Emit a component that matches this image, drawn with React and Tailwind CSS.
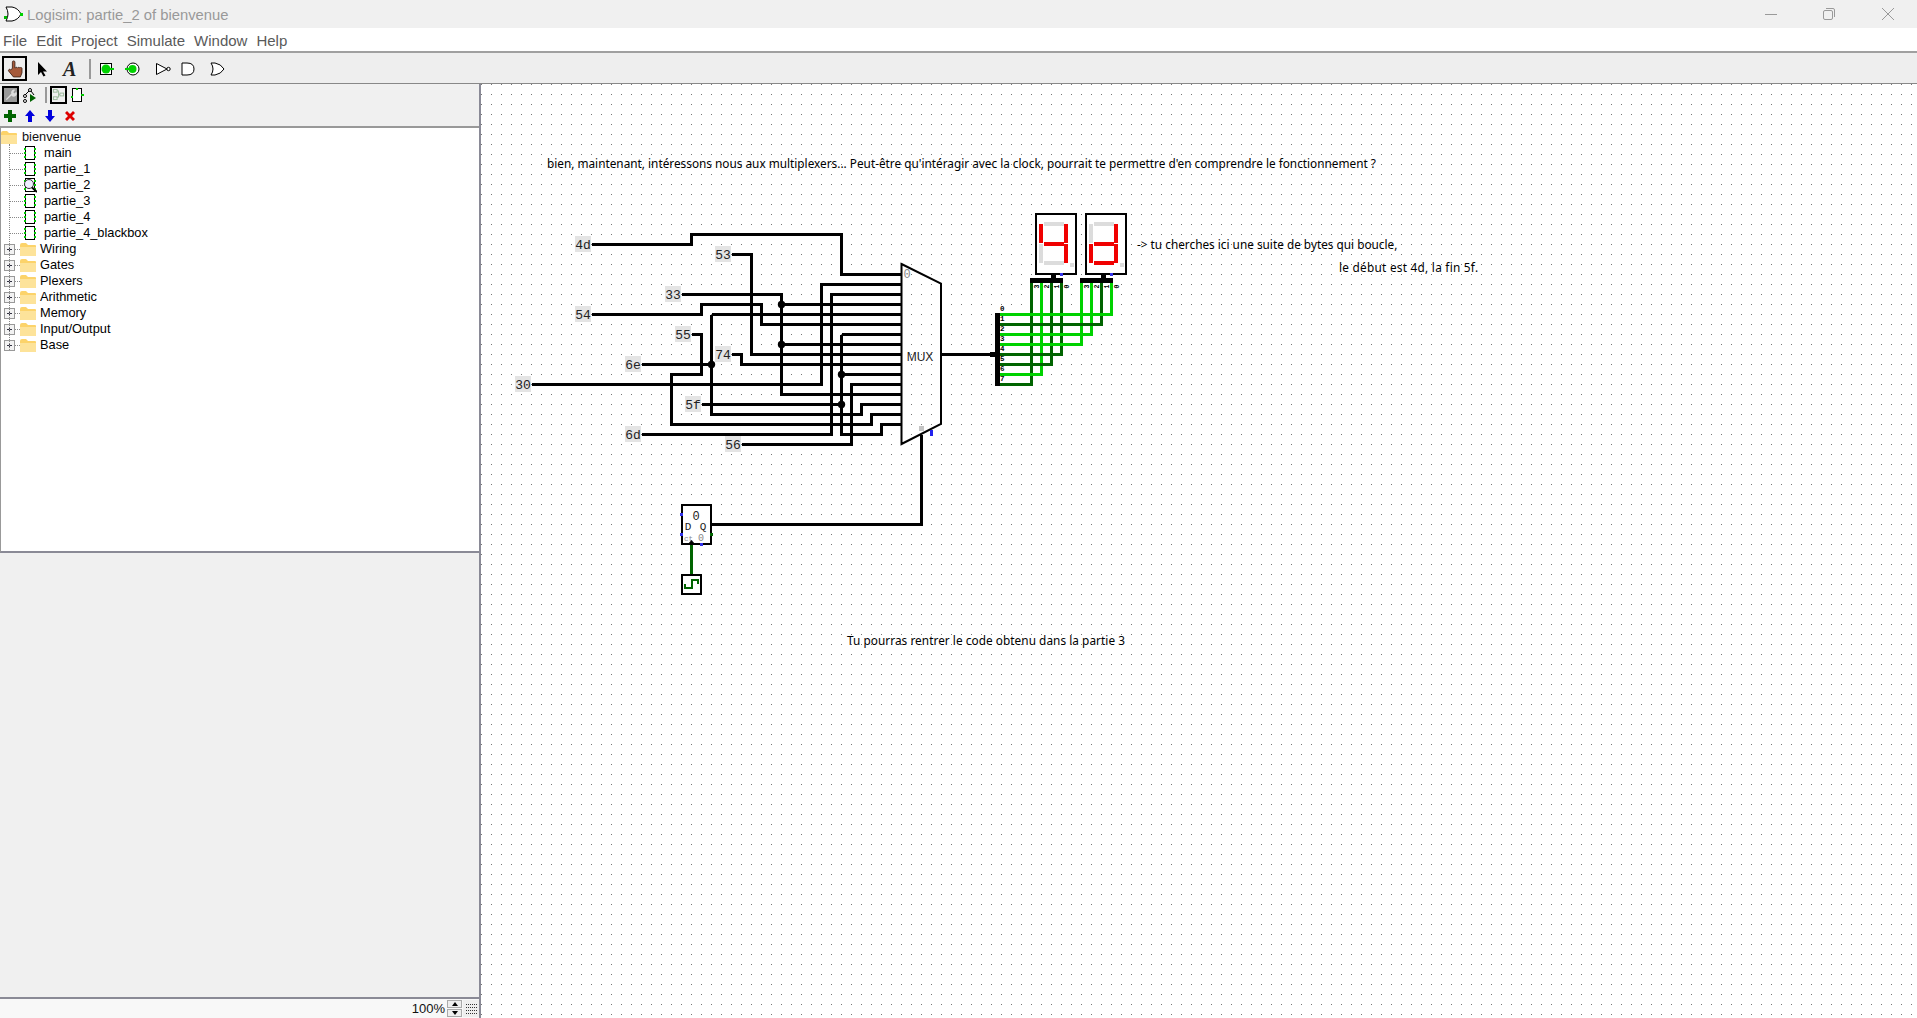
const F='"Liberation Sans", Arial, sans-serif';
const LIGHT='#00d200',DARK='#006400';
const wires=[
'M591 244H691V234H841V274H901',
'M731 254H751V354H901',
'M681 294H781V394H901','M781 304H901','M781 344H901',
'M591 314H701V304H761V324H901',
'M711 314H901','M711 314V414H861V404H901','M641 364H711',
'M731 354H741V364H901',
'M691 334H701V374H671V424H871V414H901',
'M701 404H841','M841 334V434H881V424H901','M841 334H901','M841 374H901',
'M741 444H851V384H901',
'M531 384H821V284H901',
'M641 434H831V294H901',
'M941 354H995','M921 434V524H711',
];
const juncs=[[781,304],[781,344],[711,364],[841,374],[841,404]];
const pins=[['4d',583,244],['53',723,254],['33',673,294],['54',583,314],['55',683,334],['74',723,354],['6e',633,364],['30',523,384],['5f',693,404],['6d',633,434],['56',733,444]];
const greens=[
[1031,384,DARK],[1041,374,LIGHT],[1051,364,DARK],[1061,354,DARK],
[1081,344,LIGHT],[1091,334,LIGHT],[1101,324,DARK],[1111,314,LIGHT]];
function Seven({x,on}){
 const c=k=>on.includes(k)?'#f00000':'#dcdcdc';
 return <g>
  <rect x={x} y={214} width={40} height={60} fill="#fff" stroke="#000" strokeWidth="2"/>
  <rect x={x+8} y={222} width={20} height={4} fill={c('a')}/>
  <rect x={x+3} y={224} width={4} height={19} fill={c('f')}/>
  <rect x={x+28} y={224} width={4} height={19} fill={c('b')}/>
  <rect x={x+8} y={242} width={20} height={4} fill={c('g')}/>
  <rect x={x+3} y={244} width={4} height={19} fill={c('e')}/>
  <rect x={x+28} y={244} width={4} height={19} fill={c('c')}/>
  <rect x={x+8} y={261} width={20} height={4} fill={c('d')}/>
  <rect x={x+34} y={263} width={4} height={4} fill="#dcdcdc"/>
  <rect x={x+24} y={273} width={3} height={3} fill="#3333ee"/>
  <rect x={x+15} y={275} width={5} height={4} fill="#000"/>
  <rect x={x-6} y={278} width={33} height={5} fill="#000"/>
 </g>;
}
function Canvas(){
 const mono='"Liberation Mono", monospace';
 return <svg className="block" width="1436" height="934" viewBox="481 84 1436 934" shapeRendering="crispEdges">
  <defs><pattern id="dots" x="1" y="4" width="10" height="10" patternUnits="userSpaceOnUse"><rect width="1" height="1" fill="#777"/></pattern></defs>
  <rect x="481" y="84" width="1436" height="934" fill="#fff"/>
  <rect x="481" y="84" width="1436" height="934" fill="url(#dots)"/>
  {greens.map(([x,y,c],i)=><path key={i} d={`M${x+0.5} 282V${y+0.5}H1000`} fill="none" stroke={c} strokeWidth="3"/>)}
  <rect x="995" y="313" width="5" height="73" fill="#000"/>
  <rect x="990" y="352" width="5" height="5" fill="#000"/>
  {[0,1,2,3,4,5,6,7].map(i=><text key={i} x="1000" y={311+i*10} fontSize="7.500" fontWeight="700" fontFamily={mono} fill="#000">{i}</text>)}
  <g transform="translate(0.5 0.5)">{wires.map((d,i)=><path key={i} d={d} fill="none" stroke="#000" strokeWidth="3"/>)}</g>
  {pins.map(([t,x,y])=><g key={t}><rect x={x-8} y={y-8} width={16} height={16} fill="#e4e4e4"/><text x={x} y={y+4.500} textAnchor="middle" fontSize="13" fontFamily={mono} shapeRendering="auto" fill="#222">{t}</text></g>)}
  <g shapeRendering="auto">{juncs.map(([x,y],i)=><circle key={i} cx={x+0.5} cy={y+0.5} r="3.700" fill="#000"/>)}
   <path d="M901.500 264L941 283.500V424L901.500 444Z" fill="none" stroke="#000" strokeWidth="2"/>
   <text x="920" y="360.500" textAnchor="middle" fontSize="12" fontFamily={F} fill="#222">MUX</text>
   <text x="907" y="278" textAnchor="middle" fontSize="12" fontFamily={mono} fill="#888">0</text>
  </g>
  <rect x="919" y="426" width="5" height="5" fill="#c4c4c4"/>
  <rect x="930" y="430" width="3" height="6" fill="#2222ee"/>
  <Seven x={1036} on="bcfg"/>
  <Seven x={1086} on="bcdeg"/>
  {[0,1].map(d=>[0,1,2,3].map(i=><text key={d+'-'+i} transform={`translate(${1039+d*50+i*10} 288.500) rotate(-90)`} fontSize="6.500" fontWeight="700" fontFamily={mono} fill="#000">{3-i}</text>))}
  <path d="M691.500 544V574" stroke={DARK} strokeWidth="3" fill="none"/>
  <rect x="682" y="505" width="29" height="39" fill="#fff" stroke="#000" strokeWidth="2"/>
  <g shapeRendering="auto">
   <text x="696" y="520" textAnchor="middle" fontSize="12" fontFamily={mono} fill="#222">0</text>
   <text x="688" y="530" textAnchor="middle" fontSize="11" fontFamily={mono} fill="#222">D</text>
   <text x="703" y="530" textAnchor="middle" fontSize="11" fontFamily={mono} fill="#222">Q</text>
   <text x="688.500" y="541" textAnchor="middle" fontSize="7.500" fontFamily={mono} fill="#888">ct</text>
   <text x="701" y="541" textAnchor="middle" fontSize="10" fontFamily={mono} fill="#888">0</text>
   <path d="M688 544L691.500 540L695 544Z" fill="#000"/>
  </g>
  <rect x="680" y="513" width="3" height="3" fill="#3333ee"/>
  <rect x="680" y="533" width="3" height="3" fill="#3333ee"/>
  <rect x="700" y="543" width="3" height="3" fill="#3333ee"/>
  <rect x="710" y="533" width="3" height="3" fill={DARK}/>
  <rect x="682" y="575" width="19" height="19" fill="#fff" stroke="#000" strokeWidth="2"/>
  <path d="M685 584V588H692V580H698V584" fill="none" stroke={DARK} strokeWidth="2"/>
 </svg>;
}
function Note({x,y,track=0,children}){
 return <div className="absolute whitespace-nowrap text-[11.800px] leading-[14px] text-black" style={{left:x-481,top:y-84,letterSpacing:track,fontFamily:'"Noto Sans", sans-serif'}}>{children}</div>;
}
const Leaf=({name,mag})=><div className="flex items-center h-4 pl-[9px]">
 <div className="w-[13px] border-t border-dotted border-[#888]"/>
 <svg width="14" height="16" className="shrink-0" viewBox="0 0 14 16">
  <rect x="2.500" y="1.500" width="9" height="13" fill="#fff" stroke="#000"/>
  {[3,7,11].map(y=><g key={y}><rect x="1" y={y} width="2" height="2" fill="#00c800"/><rect x="11" y={y} width="2" height="2" fill="#00c800"/></g>)}
  {mag&&<g><circle cx="6" cy="7" r="4.500" fill="#eef" stroke="#333"/><path d="M9 10.500L14 15" stroke="#000" strokeWidth="2"/></g>}
 </svg>
 <span className="ml-[7px] text-black">{name}</span>
</div>;
const Folder=({s=16})=><svg width={s} height="13" viewBox="0 0 16 13" className="shrink-0"><path d="M0 2Q0 0 2 0H6L8 2H15Q16 2 16 3V12Q16 13 15 13H1Q0 13 0 12Z" fill="#fcd36a"/><path d="M0 4H16V12Q16 13 15 13H1Q0 13 0 12Z" fill="#fde39a"/></svg>;
const Lib=({name})=><div className="flex items-center h-4 pl-[3px]">
 <svg width="11" height="11" viewBox="0 0 11 11" className="shrink-0"><rect x=".5" y=".5" width="10" height="10" fill="#f2f2f2" stroke="#999"/><path d="M3 5.500H8M5.500 3V8" stroke="#334"/></svg>
 <div className="w-[5px] border-t border-dotted border-[#888]"/>
 <Folder/>
 <span className="ml-[4px] text-black">{name}</span>
</div>;
const Selected=({className,children})=><div className={"flex items-center justify-center border-[2px] border-black shrink-0 "+className}>{children}</div>;
export default function App(){
 return <div className="w-[1917px] h-[1018px] flex flex-col overflow-hidden bg-white text-[12px]" style={{fontFamily:F}}>
  <div className="h-[28px] shrink-0 bg-[#f0f0f0] flex items-center relative">
   <svg width="22" height="18" viewBox="0 0 22 18" className="ml-[3px]"><path d="M3 2H9Q15 3 18 9Q15 15 9 16H3Q7 9 3 2Z" fill="#fff" stroke="#000"/><rect x="1" y="11" width="3" height="3" fill="#00b400"/><rect x="17" y="8" width="3" height="3" fill="#00d200"/></svg>
   <span className="ml-[2px] pt-[3px] text-[#999999] text-[14.800px]">Logisim: partie_2 of bienvenue</span>
   <div className="ml-auto flex items-center">
    <svg width="14" height="14" viewBox="0 0 14 14" className="mr-[44px]"><path d="M1 7.500H13" stroke="#999"/></svg>
    <svg width="14" height="14" viewBox="0 0 14 14" className="mr-[45px]"><rect x="1.500" y="3.500" width="9" height="9" rx="1.500" fill="none" stroke="#999"/><path d="M4 1.500H11Q12.500 1.500 12.500 3V10" fill="none" stroke="#999"/></svg>
    <svg width="14" height="14" viewBox="0 0 14 14" className="mr-[22px]"><path d="M1 1L13 13M13 1L1 13" stroke="#999"/></svg>
   </div>
  </div>
  <div className="h-[25px] shrink-0 bg-white border-b-[2px] border-[#a0a0a0] flex items-center pl-[3px] pt-[4px] gap-[9px] text-[15px] text-[#5a5a5a]">
   {['File','Edit','Project','Simulate','Window','Help'].map(m=><span key={m}>{m}</span>)}
  </div>
  <div className="h-[31px] shrink-0 bg-[#eeeeee] flex items-center pl-[2px] pt-[1px] border-b border-[#888]">
   <Selected className="w-[25px] h-[25px]"><svg width="19" height="19" viewBox="0 0 18 18"><path d="M7 9V3a1.200 1.200 0 012.400 0V8.500h.4a1.100 1.100 0 012 0h.3a1.100 1.100 0 012 0a1.100 1.100 0 012 .5V13l-1.500 4H8L3.500 11.500a1.100 1.100 0 011.800-1.300Z" fill="#a5593a" stroke="#3a2015" strokeWidth=".8"/></svg></Selected>
   <svg width="14" height="16" viewBox="0 0 14 16" className="ml-[8px]"><path d="M3 1V14L6 11L8.500 15.500L10.500 14.500L8 10.500H12Z" fill="#000"/></svg>
   <span className="ml-[14px] w-[16px] text-[20px] leading-none font-bold italic text-[#222]" style={{fontFamily:'"Liberation Serif", serif'}}>A</span>
   <div className="w-[2px] h-[20px] bg-[#999] ml-[10px]"/>
   <svg width="16" height="16" viewBox="0 0 16 16" className="ml-[7px]"><rect x="2.500" y="2.500" width="11" height="11" fill="#fff" stroke="#000"/><circle cx="8" cy="8" r="4.500" fill="#00d200"/><rect x="12" y="7" width="4" height="2" fill="#00d200"/></svg>
   <svg width="16" height="16" viewBox="0 0 16 16" className="ml-[11px]"><circle cx="8" cy="8" r="6" fill="#fff" stroke="#000"/><circle cx="7.500" cy="8" r="4" fill="#00d200"/><rect x="0" y="7" width="4" height="2" fill="#00d200"/></svg>
   <svg width="16" height="16" viewBox="0 0 16 16" className="ml-[14px]"><path d="M1.500 2.500L12 8L1.500 13.500Z" fill="#fff" stroke="#000"/><circle cx="13.500" cy="8" r="1.700" fill="#fff" stroke="#000"/></svg>
   <svg width="16" height="16" viewBox="0 0 16 16" className="ml-[9px]"><path d="M2 2H7Q14 2 14 8Q14 14 7 14H2Z" fill="#fff" stroke="#000"/></svg>
   <svg width="16" height="16" viewBox="0 0 16 16" className="ml-[13px]"><path d="M2 2H6Q12 3 15 8Q12 13 6 14H2Q6 8 2 2Z" fill="#fff" stroke="#000"/></svg>
  </div>
  <div className="flex-1 flex min-h-0">
   <div className="w-[481px] shrink-0 flex flex-col border-r-[2px] border-[#8a8a96]">
    <div className="h-[44px] shrink-0 bg-[#f0f0f0] flex flex-col border-b-[2px] border-[#999]">
     <div className="h-[21px] flex items-center pl-[2px]">
      <div className="w-[17px] h-[18px] border-[2px] border-black bg-[#999] flex items-center justify-center"><svg width="13" height="13" viewBox="0 0 14 14"><path d="M2 12L8 6A3 3 0 0112 2L10 4.500L11.500 6L13 4A3 3 0 018 8L3 13Z" fill="#ddd"/></svg></div>
      <svg width="16" height="16" viewBox="0 0 16 16" className="ml-[3px]"><circle cx="8" cy="3" r="1.500" fill="#fff" stroke="#000"/><circle cx="3" cy="9" r="1.500" fill="#fff" stroke="#000"/><circle cx="3" cy="14" r="1.500" fill="#fff" stroke="#000"/><path d="M7 4L3 8M9 4L12 8" stroke="#000"/><path d="M8 7V15L14 11Z" fill="#006400"/></svg>
      <div className="w-[2px] h-[16px] bg-[#999] ml-[7px]"/>
      <div className="ml-[3px] w-[17px] h-[18px] border-[2px] border-black flex items-center justify-center"><svg width="13" height="13" viewBox="0 0 14 14"><g fill="none" stroke="#9ab89a"><rect x="1.500" y="1.500" width="4" height="3"/><rect x="1.500" y="9.500" width="4" height="3"/><rect x="8.500" y="5.500" width="4" height="3"/><path d="M5.500 3H7V10H5.500M7 7H8.500"/></g></svg></div>
      <svg width="14" height="16" viewBox="0 0 14 16" className="ml-[3px]"><rect x="2.500" y="1.500" width="9" height="13" fill="#fff" stroke="#000"/><rect x="1" y="9" width="2" height="2" fill="#00c800"/><rect x="11" y="7" width="3" height="2" fill="#00c800"/><rect x="6" y="1" width="2" height="2" fill="#00c800"/></svg>
     </div>
     <div className="h-[21px] flex items-center pl-[4px] gap-[8px]">
      <svg width="12" height="12" viewBox="0 0 12 12"><path d="M4 0H8V4H12V8H8V12H4V8H0V4H4Z" fill="#006400"/></svg>
      <svg width="12" height="12" viewBox="0 0 12 12"><path d="M6 0L11 6H8V12H4V6H1Z" fill="#0000dd"/></svg>
      <svg width="12" height="12" viewBox="0 0 12 12"><path d="M6 12L11 6H8V0H4V6H1Z" fill="#0000dd"/></svg>
      <svg width="12" height="12" viewBox="0 0 12 12"><path d="M1 3L3 1L6 4L9 1L11 3L8 6L11 9L9 11L6 8L3 11L1 9L4 6Z" fill="#dd0000"/></svg>
     </div>
    </div>
    <div className="h-[425px] shrink-0 relative bg-white border-b-[2px] border-[#8a8a96] border-l border-l-[#999] pt-[1px] text-[12.800px] text-[#111]">
     <div className="absolute left-[8px] top-[16px] h-[206px] border-l border-dotted border-[#888]"/>
     <div className="flex items-center h-4"><Folder/><span className="ml-[5px]">bienvenue</span></div>
     <Leaf name="main"/><Leaf name="partie_1"/><Leaf name="partie_2" mag/><Leaf name="partie_3"/><Leaf name="partie_4"/><Leaf name="partie_4_blackbox"/>
     <Lib name="Wiring"/><Lib name="Gates"/><Lib name="Plexers"/><Lib name="Arithmetic"/><Lib name="Memory"/><Lib name="Input/Output"/><Lib name="Base"/>
    </div>
    <div className="flex-1 bg-[#f0f0f0] border-b-[2px] border-[#8a8a96]"/>
    <div className="h-[19px] shrink-0 bg-[#f8f8f8] flex items-center justify-end">
     <span className="text-[13px] text-[#111]">100%</span>
     <div className="w-[15px] ml-[2px] flex flex-col gap-[1px]">
      <div className="h-[8px] bg-[#eee] border border-[#aaa] flex items-center justify-center"><div className="w-0 h-0 border-x-[3px] border-x-transparent border-b-[4px] border-b-black"/></div>
      <div className="h-[8px] bg-[#eee] border border-[#aaa] flex items-center justify-center"><div className="w-0 h-0 border-x-[3px] border-x-transparent border-t-[4px] border-t-black"/></div>
     </div>
     <svg width="16" height="17" viewBox="0 0 16 17" className="ml-[1px]"><rect width="16" height="17" fill="#eee"/><path d="M3 4.500H14M3 7.500H14M3 10.500H14M3 13.500H14" stroke="#333" strokeDasharray="1 1"/></svg>
    </div>
   </div>
   <div className="flex-1 relative overflow-hidden min-w-0">
    <Canvas/>
    <Note x={547} y={156}>bien, maintenant, intéressons nous aux multiplexers... Peut-être qu'intéragir avec la clock, pourrait te permettre d'en comprendre le fonctionnement ?</Note>
    <Note x={1137} y={237}>-&gt; tu cherches ici une suite de bytes qui boucle,</Note>
    <Note x={1339} y={260} track={0.26}>le début est 4d, la fin 5f.</Note>
    <Note x={847} y={633} track={0.05}>Tu pourras rentrer le code obtenu dans la partie 3</Note>
   </div>
  </div>
 </div>;
}
